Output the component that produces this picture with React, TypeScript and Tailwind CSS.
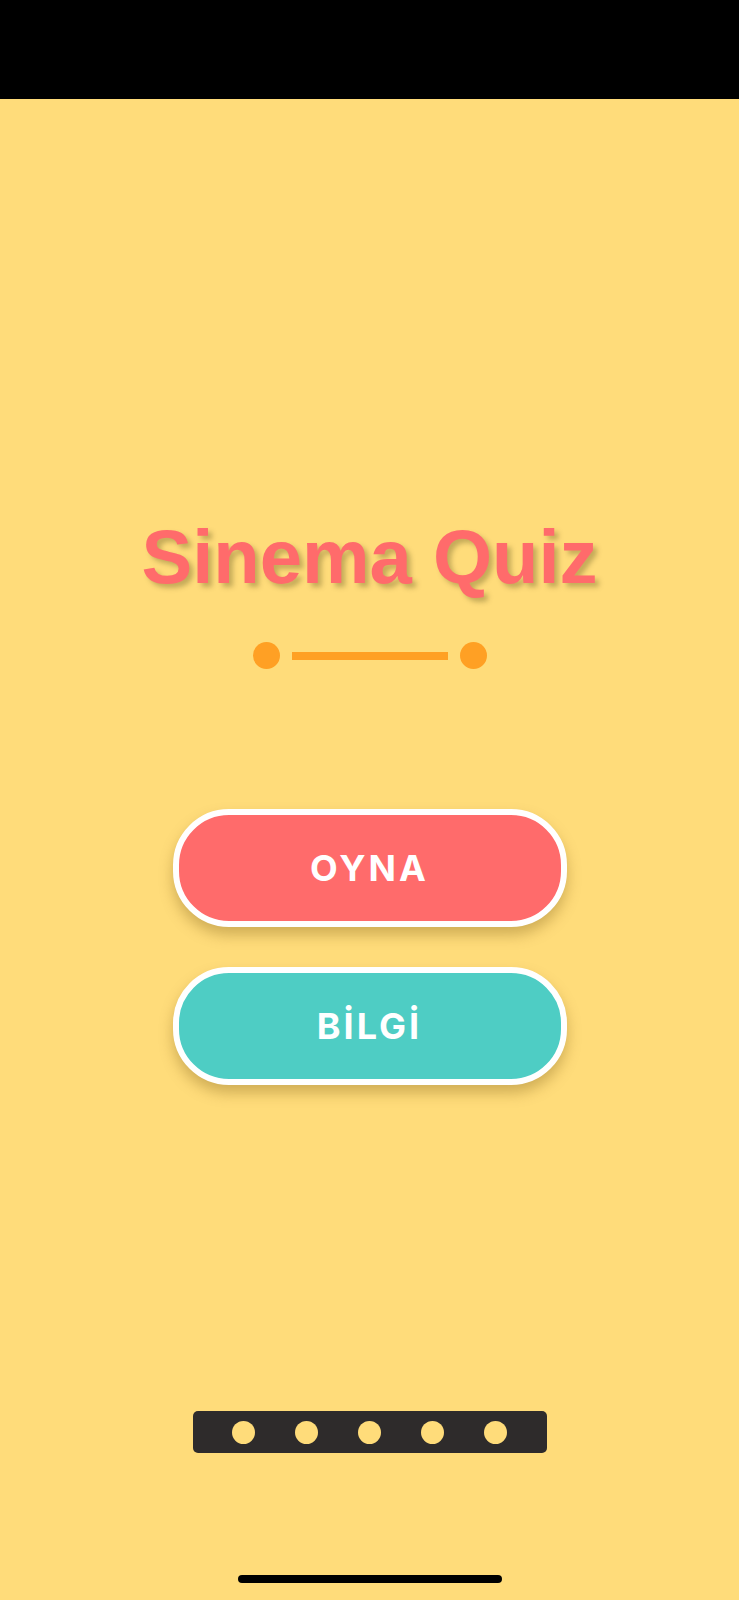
import React from "react";

const MenuButton = ({ label, color }: { label: string; color: string }) => (
	<button
		className={`flex h-[118px] w-[394px] items-center justify-center rounded-[56px] border-[6px] border-white ${color} shadow-[0_8px_14px_rgba(120,90,20,0.35)]`}
	>
		<span className="font-['Inter','Roboto',sans-serif] text-[36px] font-bold tracking-[3px] text-white">
			{label}
		</span>
	</button>
);

export default function App() {
	return (
		<div className="flex h-[1600px] w-full flex-col bg-[#FFDC7A]">
			<div className="h-[99px] w-full bg-black" />

			<div className="flex flex-col items-center pt-[420px]">
				<h1 className="font-['Liberation_Sans',Arial,sans-serif] text-[76px] leading-none font-bold text-[#FF6B6B] [text-shadow:4px_4px_5px_rgba(90,80,30,0.35)]">
					Sinema Quiz
				</h1>

				<div className="mt-[47px] flex items-center gap-3">
					<div className="h-[27px] w-[27px] rounded-full bg-[#FFA024]" />
					<div className="h-[8px] w-[156px] bg-[#FFA024]" />
					<div className="h-[27px] w-[27px] rounded-full bg-[#FFA024]" />
				</div>

				<div className="mt-[140px] flex flex-col gap-[40px]">
					<MenuButton label="OYNA" color="bg-[#FF6B6B]" />
					<MenuButton label="BİLGİ" color="bg-[#4ECDC4]" />
				</div>

				<div className="mt-[326px] flex h-[42px] w-[354px] items-center justify-center gap-[40px] rounded-[5px] bg-[#2E2B2B]">
					{[0, 1, 2, 3, 4].map((i) => (
						<div key={i} className="h-[23px] w-[23px] rounded-full bg-[#FFDC7A]" />
					))}
				</div>
			</div>

			<div className="mt-auto mb-[17px] flex justify-center">
				<div className="h-[8px] w-[264px] rounded-full bg-black" />
			</div>
		</div>
	);
}
